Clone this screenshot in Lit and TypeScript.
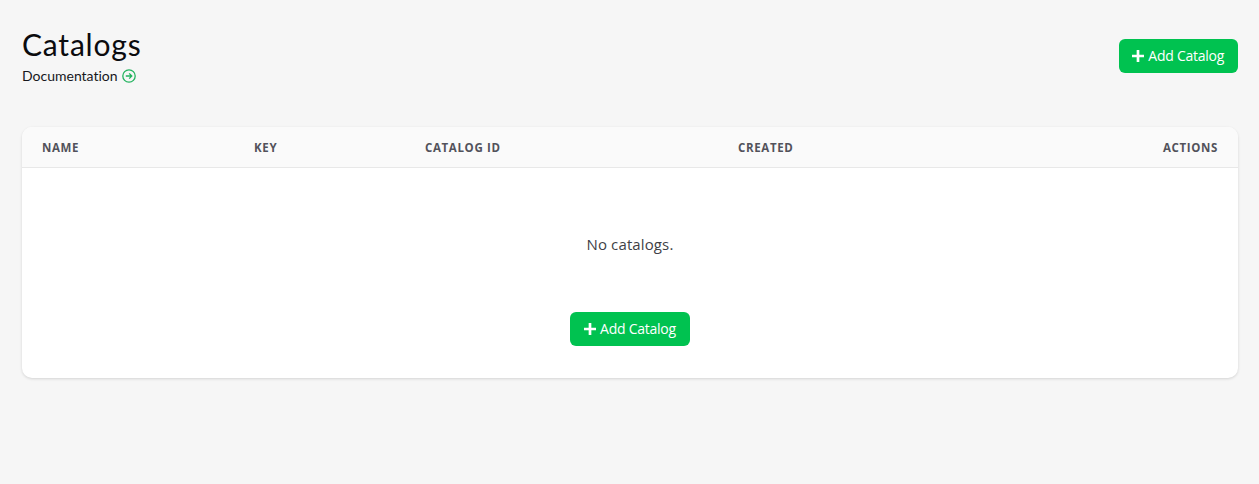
import { LitElement, html, css } from "lit";
import { customElement } from "lit/decorators.js";

const plus = html`<svg class="plus" viewBox="0 0 13 13" width="12" height="12" aria-hidden="true"><path d="M6.5 0.5v12M0.5 6.5h12" stroke="#fff" stroke-width="2.9" fill="none" stroke-linecap="round"/></svg>`;

@customElement("app-root")
export class AppRoot extends LitElement {
  static styles = css`
    :host { display: block; min-height: 484px; background: #f6f6f6; box-sizing: border-box; padding: 27px 21px 0 22px; font-family: "Open Sans", "Noto Sans", sans-serif; color: #3f3f46; }
    .head { display: flex; justify-content: space-between; align-items: flex-start; height: 100px; }
    h1 { margin: 0; font: 400 30px/34px Lato, sans-serif; color: #0b0b0e; letter-spacing: 0.8px; font-variant-ligatures: none; }
    .doc { display: flex; align-items: center; gap: 4px; margin-top: 5px; font: 400 14px/20px Lato, sans-serif; color: #17171c; font-variant-ligatures: none; }
    .btn { display: inline-flex; align-items: center; justify-content: center; gap: 4px; box-sizing: border-box; height: 34px; width: 120px; border: 0; padding: 0; border-radius: 6px; background: #00c250; color: #fff; font: 400 14px/20px "Open Sans", sans-serif; letter-spacing: -0.25px; }
    .head .btn { margin-top: 12px; width: 119.5px; }
    .card { background: #fff; border-radius: 10px; overflow: hidden; box-shadow: 0 1px 3px rgba(0,0,0,.14); }
    .row { display: grid; grid-template-columns: 212px 171px 313px 1fr auto; align-items: center; height: 40px; padding: 0 20px; background: #fafafa; border-bottom: 1px solid #e8e8e8; font-size: 11.5px; font-weight: 700; letter-spacing: 0.65px; color: #52525b; }
    .empty { display: flex; flex-direction: column; align-items: center; height: 210px; box-sizing: border-box; padding-top: 64px; }
    .empty p { margin: 0 0 56px; font-size: 15px; line-height: 24px; letter-spacing: 0.12px; color: #3f3f46; }
  `;
  render() {
    return html`
      <div class="head">
        <div>
          <h1>Catalogs</h1>
          <div class="doc">Documentation
            <svg viewBox="0 0 14 14" width="14" height="14" aria-hidden="true"><circle cx="7" cy="7" r="6.2" fill="none" stroke="#22b35e" stroke-width="1.3"/><path d="M3.8 7h6M7.2 4.4 9.8 7 7.2 9.6" fill="none" stroke="#22b35e" stroke-width="1.3"/></svg>
          </div>
        </div>
        <button class="btn">${plus}Add Catalog</button>
      </div>
      <div class="card">
        <div class="row"><span>NAME</span><span>KEY</span><span>CATALOG ID</span><span>CREATED</span><span>ACTIONS</span></div>
        <div class="empty">
          <p>No catalogs.</p>
          <button class="btn">${plus}Add Catalog</button>
        </div>
      </div>`;
  }
}
